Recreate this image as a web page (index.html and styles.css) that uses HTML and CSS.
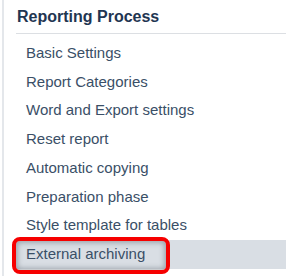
FILE: index.html
```html
<!DOCTYPE html>
<html lang="en">
<head>
  <meta charset="UTF-8">
  <title>Reporting Process</title>
  <link rel="stylesheet" href="styles.css">
</head>
<body>
  <div class="panel">
    <h2 class="panel-title">Reporting Process</h2>
    <ul class="menu">
      <li class="menu-item">Basic Settings</li>
      <li class="menu-item">Report Categories</li>
      <li class="menu-item">Word and Export settings</li>
      <li class="menu-item">Reset report</li>
      <li class="menu-item">Automatic copying</li>
      <li class="menu-item">Preparation phase</li>
      <li class="menu-item">Style template for tables</li>
      <li class="menu-item active">External archiving<span class="marker"></span></li>
    </ul>
  </div>
</body>
</html>
```

FILE: styles.css
```css
body {
  margin: 0;
  background: #fff;
  font-family: "Liberation Sans", Arial, sans-serif;
}
.panel {
  margin-left: 2px;
  border-left: 2px solid #e4e7eb;
  padding: 0 10px 0 12px;
  height: 276px;
}
.panel-title {
  margin: 0;
  padding: 7px 0 6px 1px;
  font-size: 16px;
  line-height: 20px;
  font-weight: bold;
  color: #1f3652;
  border-bottom: 1px solid #dcdfe3;
}
.menu {
  list-style: none;
  margin: 0;
  padding: 5px 0 0;
}
.menu-item {
  position: relative;
  padding-left: 10px;
  font-size: 15px;
  line-height: 28.7px;
  color: #3a4f67;
}
.menu-item.active {
  background: #d9dee4;
}
.marker {
  position: absolute;
  left: -4px;
  top: -3px;
  width: 158px;
  height: 37px;
  box-sizing: border-box;
  border: 4px solid #f60000;
  border-radius: 8px;
  box-shadow: inset 0 0 5px 2px rgba(90, 100, 110, 0.45);
}
```
